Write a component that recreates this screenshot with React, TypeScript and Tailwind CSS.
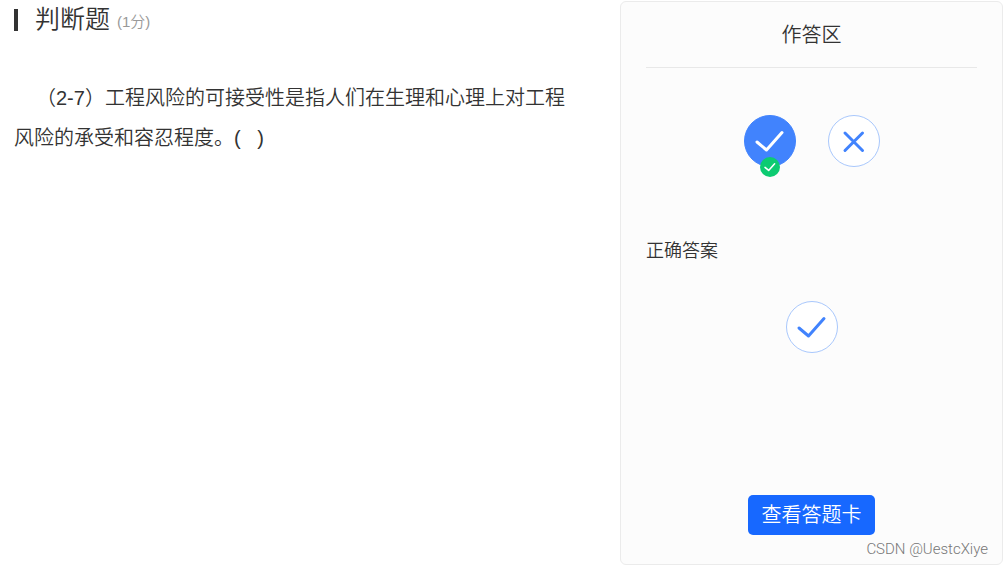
import { useState } from "react"

type MarkProps = {
  className?: string
  width?: number
}

function CheckMark({ className, width = 3 }: MarkProps) {
  return (
    <svg viewBox="0 0 52 52" className={className} fill="none" stroke="currentColor" strokeWidth={width} strokeLinecap="round" strokeLinejoin="round">
      <path d="M13 27L22.500 35L38 17.500" />
    </svg>
  )
}

function CrossMark({ className }: MarkProps) {
  return (
    <svg viewBox="0 0 52 52" className={className} fill="none" stroke="currentColor" strokeWidth={3} strokeLinecap="round">
      <path d="M17 18L34.500 35.500M34.500 18L17 35.500" />
    </svg>
  )
}

function App() {
  const [answer, setAnswer] = useState("true")

  const circle = "relative block size-[52px] rounded-full border"
  const picked = "border-[#4183fd] bg-[#4183fd] text-white"
  const empty = "border-[#a9c8fc] bg-white text-[#4183fd]"

  return (
    <div className="flex min-h-screen bg-white py-px font-['Liberation_Sans','Noto_Sans_CJK_SC',sans-serif] font-[350] text-[#333333]">
      <main className="flex-1 pl-3.5 pr-12">
        <div className="flex h-9 items-center">
          <span className="mt-0.5 h-[22px] w-1 bg-[#333333]" />
          <h1 className="ml-[17px] text-[25px] leading-9">判断题</h1>
          <span className="ml-[7px] pt-1.5 text-[15px] text-[#999999]">(1分)</span>
        </div>
        <p className="mt-[41px] indent-[22px] text-[20px] leading-10">
          （2-7）工程风险的可接受性是指人们在生理和心理上对工程风险的承受和容忍程度。(&nbsp;&nbsp;&nbsp;)
        </p>
      </main>

      <aside className="relative flex w-[383px] shrink-0 flex-col rounded-md border border-[#ebebeb] bg-[#fcfcfc] px-[25px] pb-[29px]">
        <h2 className="border-b border-[#e8e8e8] pb-3 pt-[13px] text-center text-[20px] leading-10">作答区</h2>

        <div className="mt-[47px] flex justify-center gap-8">
          <label className="cursor-pointer">
            <input type="radio" name="answer" value="true" aria-label="正确" className="sr-only" checked={answer === "true"} onChange={(e) => setAnswer(e.target.value)} />
            <span className={`${circle} ${answer === "true" ? picked : empty}`}>
              <CheckMark className="absolute -inset-px" />
              <span className="absolute left-[15px] top-[41px] size-5 rounded-full bg-[#0ccb71] text-white">
                <CheckMark className="size-5" width={4} />
              </span>
            </span>
          </label>
          <label className="cursor-pointer">
            <input type="radio" name="answer" value="false" aria-label="错误" className="sr-only" checked={answer === "false"} onChange={(e) => setAnswer(e.target.value)} />
            <span className={`${circle} ${answer === "false" ? picked : empty}`}>
              <CrossMark className="absolute -inset-px" />
            </span>
          </label>
        </div>

        <h3 className="mt-[70px] text-[18px] leading-7">正确答案</h3>
        <div className="mt-9 flex justify-center">
          <span className={`${circle} ${empty}`}>
            <CheckMark className="absolute -inset-px" />
          </span>
        </div>

        <button type="button" className="mx-auto mt-auto h-10 w-[127px] cursor-pointer rounded-[5px] bg-[#1768ff] text-[20px] text-white">
          查看答题卡
        </button>

        <span className="absolute bottom-[5px] right-3.5 font-[Roboto,sans-serif] text-[15px] leading-5 text-[#777777]">CSDN @UestcXiye</span>
      </aside>
    </div>
  )
}

export default App
